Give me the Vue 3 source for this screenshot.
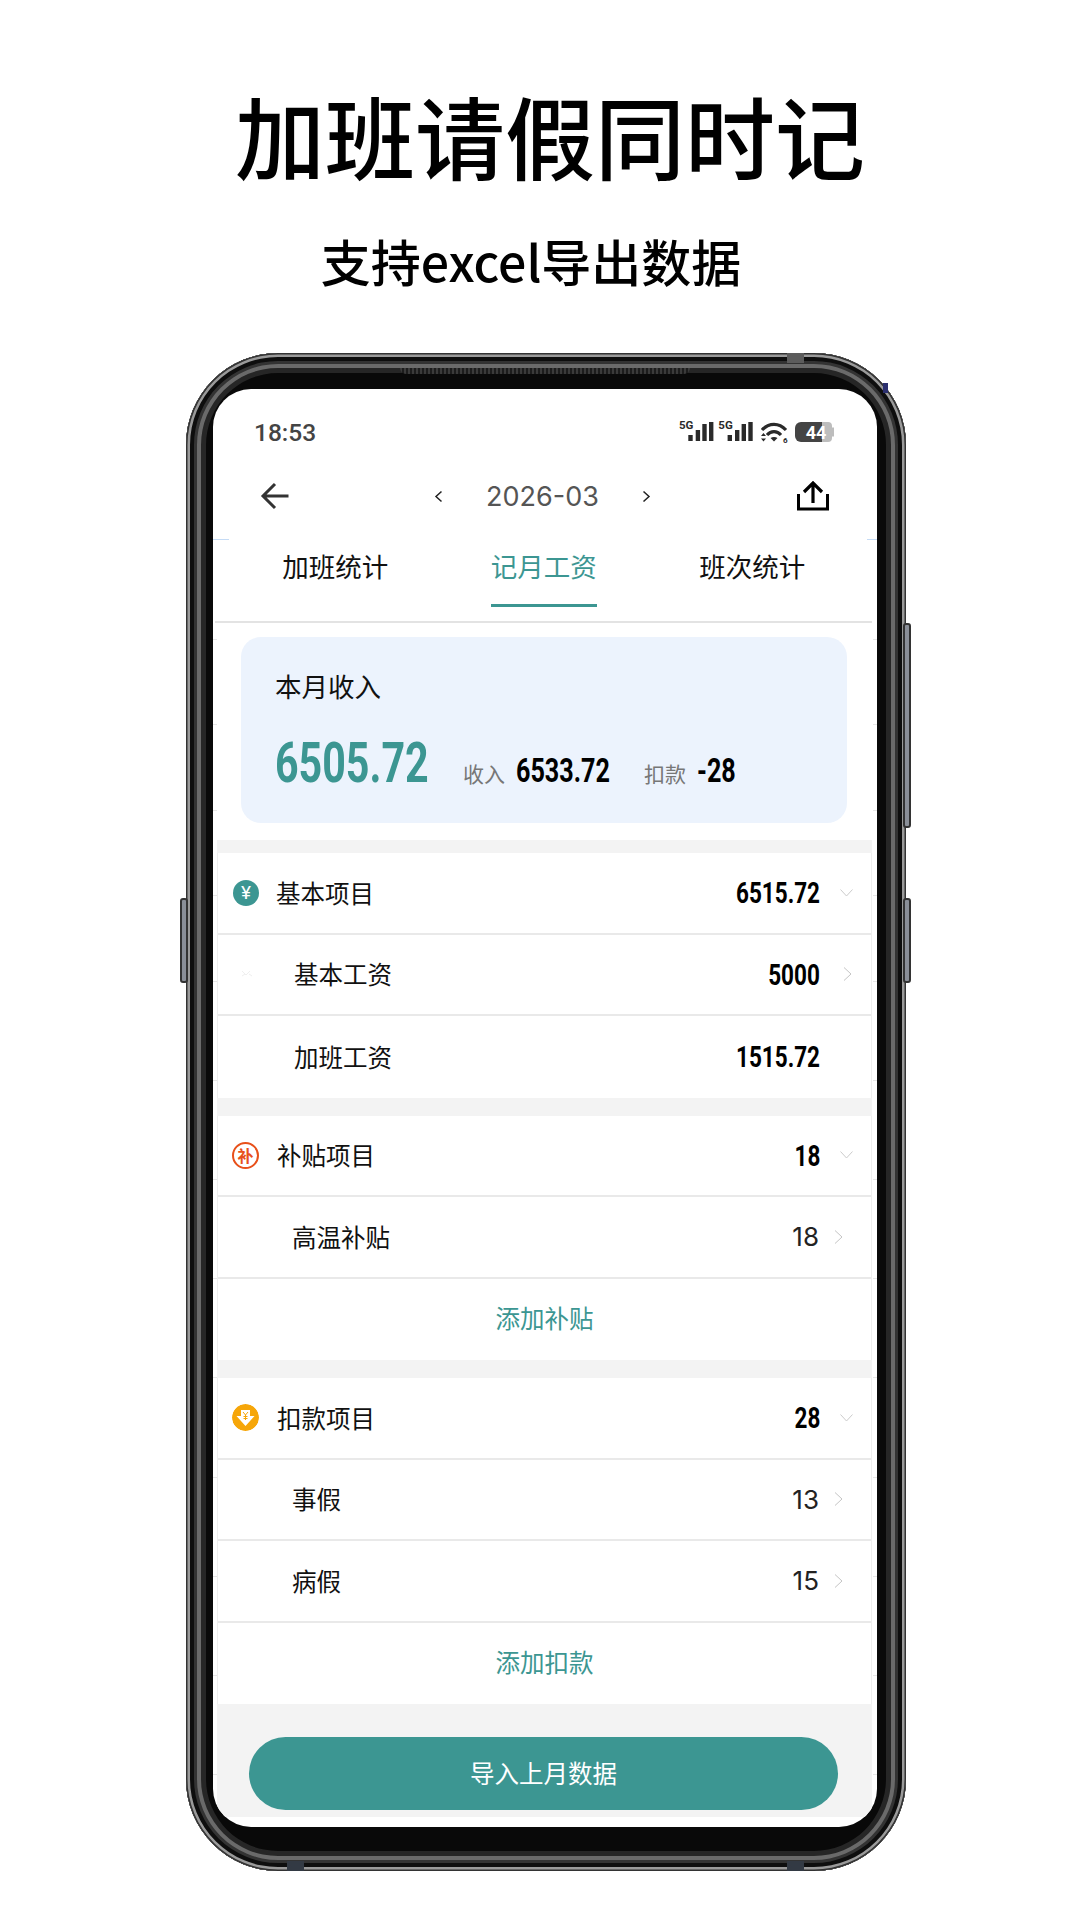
<script setup>
const groups = [
  {
    name: '基本项目', total: '6515.72', icon: 'yen', wide: true,
    items: [
      { name: '基本工资', value: '5000', bold: true, arrow: true },
      { name: '加班工资', value: '1515.72', bold: true, arrow: false }
    ]
  },
  {
    name: '补贴项目', total: '18', icon: 'bu',
    items: [{ name: '高温补贴', value: '18', arrow: true }],
    add: '添加补贴'
  },
  {
    name: '扣款项目', total: '28', icon: 'down',
    items: [
      { name: '事假', value: '13', arrow: true },
      { name: '病假', value: '15', arrow: true }
    ],
    add: '添加扣款'
  }
]

const tabs = ['加班统计', '记月工资', '班次统计']
// leftover marks of the mockup along both screen edges
const ticks = [250, 335, 421, 506, 592, 691, 790, 889, 988, 1088, 1187, 1286, 1385]
</script>

<template>
  <div class="page">
    <header class="hero">
      <h1 class="title">加班请假同时记</h1>
      <p class="subtitle">支持excel导出数据</p>
    </header>

    <div class="phone">
      <i class="stray"></i>
      <i class="speaker"></i>
      <i class="seam seam-top"></i>
      <i class="seam seam-bottom-l"></i>
      <i class="seam seam-bottom-r"></i>
      <i class="btn btn-power"></i>
      <i class="btn btn-side-r"></i>
      <i class="btn btn-side-l"></i>

      <div class="screen">
        <i v-for="t in ticks" :key="'l' + t" class="tick tick-l" :style="{ top: t + 'px' }"></i>
        <i v-for="t in ticks" :key="'r' + t" class="tick tick-r" :style="{ top: t + 'px' }"></i>
        <i class="blue blue-l"></i>
        <i class="blue blue-r"></i>

        <div class="status">
          <span class="time">18:53</span>
          <svg class="status-icons" width="156" height="30" viewBox="0 -3 156 30">
            <text x="0" y="8.6" class="net">5G</text>
            <path d="M9.3 15h4.400v6h-4.400zM16.7 10h4.400v11h-4.400zM23.3 4h4.400v17h-4.400zM30 2h4.400v19h-4.400z" fill="#2a2a2a" />
            <text x="39.3" y="8.6" class="net">5G</text>
            <path d="M48.6 15h4.400v6h-4.400zM56 10h4.400v11h-4.400zM62.6 4h4.400v17h-4.400zM69.3 2h4.400v19h-4.400z" fill="#2a2a2a" />
            <path d="M83 10C90 2.500 100 2.500 107 10M88 15c4-4.500 10-4.500 14 0" fill="none" stroke="#2a2a2a" stroke-width="3.200" />
            <path d="M91.500 18c2-1.500 5-1.500 7 0L95 21.500z" fill="#2a2a2a" />
            <path d="M84.500 13l2.500 3h-5zM84.500 21.500L82 18.500h5z" fill="#2a2a2a" />
            <text x="104" y="22.500" class="wifi-six">6</text>
            <path d="M122 2h21v20h-21a6 6 0 0 1-6-6v-8a6 6 0 0 1 6-6z" fill="#444" />
            <path d="M143 2h6a4 4 0 0 1 4 4v1.500h2v9h-2V18a4 4 0 0 1-4 4h-6z" fill="#bdbdbd" />
            <text x="137" y="18.500" class="batt">44</text>
          </svg>
        </div>

        <nav class="nav">
          <svg class="back" width="30" height="28" viewBox="0 0 30 28">
            <path d="M28.500 14H3M15 2L3 14l12 12" fill="none" stroke="#333" stroke-width="3" />
          </svg>
          <div class="month">
            <svg width="9" height="13" viewBox="0 0 9 13"><path d="M7.500 1.500L2 6.500l5.500 5" fill="none" stroke="#222" stroke-width="1.500" /></svg>
            <span class="date">2026-03</span>
            <svg width="9" height="13" viewBox="0 0 9 13"><path d="M1.500 1.500L7 6.500l-5.500 5" fill="none" stroke="#222" stroke-width="1.500" /></svg>
          </div>
          <svg class="share" width="34" height="30" viewBox="0 0 34 30">
            <path d="M2.500 13v15h29V13" fill="none" stroke="#000" stroke-width="3" />
            <path d="M17 22V3M8 11l9-9 9 9" fill="none" stroke="#000" stroke-width="3.200" />
          </svg>
        </nav>

        <div class="tabs">
          <div v-for="(t, i) in tabs" :key="t" class="tab">
            <span :class="{ active: i === 1 }">{{ t }}</span>
          </div>
        </div>

        <section class="card">
          <div class="card-title">本月收入</div>
          <div class="card-nums">
            <span class="big">6505.72</span>
            <span class="cap cap-first">收入</span>
            <span class="mid mid-income">6533.72</span>
            <span class="cap cap-next">扣款</span>
            <span class="mid mid-minus">-28</span>
          </div>
        </section>

        <div class="sheet">
          <svg class="speck" width="12" height="8" viewBox="0 0 12 8"><path d="M1 1l4 4 4-4M1 6l3-2M11 6l-3-2" fill="none" stroke="#efefef" stroke-width="1" /></svg>
          <section v-for="g in groups" :key="g.name" class="group">
            <div class="row head">
              <span v-if="g.icon === 'yen'" class="ico ico-yen">¥</span>
              <span v-else-if="g.icon === 'bu'" class="ico ico-bu">补</span>
              <svg v-else class="ico" width="27" height="27" viewBox="0 0 27 27">
                <circle cx="13.500" cy="13.500" r="13.500" fill="#f6a609" />
                <path d="M9 6h9v6h4.500l-9 10-9-10H9z" fill="#fff" />
                <path d="M11 8l2.500 3 2.500-3M13.500 11v5M11.500 12.500h4M11.500 14.500h4" fill="none" stroke="#f6a609" stroke-width="1" />
              </svg>
              <span class="label">{{ g.name }}</span>
              <span class="num num-bold">{{ g.total }}</span>
              <span class="chev">
                <svg width="13" height="8" viewBox="0 0 13 8"><path d="M.5.500l6 6.500 6-6.500" fill="none" stroke="#ccc" stroke-width="1" /></svg>
              </span>
            </div>
            <div v-for="it in g.items" :key="it.name" class="row item" :class="{ 'item-wide': g.wide }">
              <span class="label">{{ it.name }}</span>
              <span class="num" :class="{ 'num-bold': it.bold, 'num-light': !it.bold }">{{ it.value }}</span>
              <span class="chev" :class="{ 'chev-wide': g.wide }">
                <svg v-if="it.arrow" width="9" height="14" viewBox="0 0 9 14"><path d="M1 .500l7 6.500-7 6.500" fill="none" stroke="#c4c4c4" stroke-width="1" /></svg>
              </span>
            </div>
            <div v-if="g.add" class="row add">{{ g.add }}</div>
          </section>

          <div class="foot">
            <button class="import">导入上月数据</button>
          </div>
        </div>
      </div>
    </div>
  </div>
</template>

<style>
html,
body {
  margin: 0;
  background: #fff;
}
</style>

<style scoped>
.page {
  position: relative;
  width: 1080px;
  height: 1920px;
  overflow: hidden;
  background: #fff;
  font-family: "Noto Sans CJK SC", "Noto Sans", sans-serif;
  color: #111;
}

.hero {
  height: 353px;
  box-sizing: border-box;
  padding-top: 84px;
  text-align: center;
}

.title {
  margin: 0;
  padding-left: 20px;
  font-size: 90px;
  line-height: 100px;
  font-weight: 500;
  color: #000;
}

.subtitle {
  margin: 46px 0 0;
  padding-right: 18px;
  font-size: 50px;
  line-height: 60px;
  font-weight: 500;
  color: #000;
}

.phone {
  position: relative;
  z-index: 0;
  box-sizing: border-box;
  width: 720px;
  height: 1518px;
  margin-left: 186px;
  padding: 36px 29px 44px 27px;
  border-radius: 92px;
  background: #090909;
  box-shadow:
    inset 0 0 0 1.500px #333,
    inset 0 0 0 4px #9a9a9a,
    inset 0 0 0 8px #0e0e0e,
    inset 0 0 0 11px #333,
    inset 0 0 0 15px #6a6a6a,
    inset 0 0 0 20px #262626;
}

.stray {
  position: absolute;
  left: 697px;
  top: 30px;
  width: 5px;
  height: 10px;
  background: #2b2f6e;
  z-index: -1;
}

.speaker {
  position: absolute;
  left: 214px;
  top: 15px;
  width: 290px;
  height: 6px;
  border-radius: 0 0 6px 6px;
  background: repeating-linear-gradient(90deg, #3a3a3a 0 2px, #1c1c1c 2px 4px);
}

.seam {
  position: absolute;
  width: 17px;
  height: 10px;
  background: #5c5c5c;
}

.seam-top {
  left: 601px;
  top: 0;
}

.seam-bottom-l {
  left: 101px;
  bottom: 0;
  background: #333a44;
}

.seam-bottom-r {
  left: 601px;
  bottom: 0;
  background: #333a44;
}

.btn {
  position: absolute;
  box-sizing: border-box;
  width: 8px;
  border: 2px solid #333;
  border-radius: 3px;
  background: #8a8f98;
}

.btn-power {
  left: 717px;
  top: 270px;
  height: 205px;
}

.btn-side-r {
  left: 717px;
  top: 545px;
  height: 85px;
}

.btn-side-l {
  left: -6px;
  top: 545px;
  height: 85px;
}

.screen {
  position: relative;
  width: 664px;
  height: 1438px;
  overflow: hidden;
  border-radius: 38px;
  background: #fff;
}

.tick {
  position: absolute;
  width: 4px;
  height: 1px;
  background: #e6e6e6;
}

.tick-l {
  left: 0;
}

.tick-r {
  right: 0;
}

.blue {
  position: absolute;
  top: 150px;
  height: 1px;
  background: #c5dbf5;
}

.blue-l {
  left: 0;
  width: 16px;
}

.blue-r {
  right: 0;
  width: 10px;
}

.status {
  position: relative;
  display: flex;
  align-items: center;
  justify-content: space-between;
  height: 86px;
  padding: 0 42px 0 41px;
}

.time {
  font-family: Roboto, sans-serif;
  font-size: 24.5px;
  font-weight: 500;
  color: #444;
}

.status-icons {
  display: block;
}

.net {
  font-family: Roboto, sans-serif;
  font-size: 11.5px;
  font-weight: 700;
  fill: #2a2a2a;
}

.wifi-six {
  font-family: Roboto, sans-serif;
  font-size: 8px;
  font-weight: 700;
  fill: #2a2a2a;
}

.batt {
  font-family: Roboto, sans-serif;
  font-size: 18px;
  font-weight: 700;
  fill: #fff;
  text-anchor: middle;
}

.nav {
  position: relative;
  display: grid;
  grid-template-columns: 1fr auto 1fr;
  align-items: center;
  height: 42px;
  padding: 0 47px;
}

.back {
  display: block;
}

.share {
  display: block;
  justify-self: end;
}

.month {
  display: flex;
  align-items: center;
  gap: 43px;
  margin-left: -5px;
}

.month svg {
  display: block;
}

.date {
  padding-top: 2px;
  font-family: Inter, sans-serif;
  font-size: 27px;
  line-height: 36px;
  color: #555;
}

.tabs {
  position: relative;
  display: grid;
  grid-template-columns: repeat(3, 208.500px);
  height: 84px;
  box-sizing: border-box;
  margin: 22px 5px 0 2px;
  padding: 12px 0 0 16px;
  border-bottom: 2px solid #e3e3e3;
}

.tab {
  text-align: center;
  font-size: 26.500px;
  line-height: 30px;
  color: #111;
}

.tab span {
  display: inline-block;
  padding-bottom: 23px;
}

.tab .active {
  color: #3c9692;
  border-bottom: 3px solid #3c9692;
}

.card {
  position: relative;
  display: flex;
  flex-direction: column;
  box-sizing: border-box;
  width: 606px;
  height: 186px;
  margin: 14px 0 17px 28px;
  padding: 34px 34px 0;
  border-radius: 20px;
  background: #ecf3fd;
}

.card-title {
  font-size: 26.500px;
  line-height: 30px;
  color: #111;
}

.card-nums {
  display: flex;
  align-items: baseline;
  margin-top: 32px;
  line-height: 60px;
}

.big {
  display: inline-block;
  margin-right: -55px;
  font-family: Roboto, sans-serif;
  font-size: 56px;
  font-weight: 700;
  color: #3c9692;
  transform: scaleX(0.735);
  transform-origin: left center;
}

.cap {
  font-size: 21px;
  color: #777;
  margin-right: 11px;
}

.cap-first {
  margin-left: 34px;
}

.cap-next {
  margin-left: 34px;
}

.mid {
  display: inline-block;
  font-family: Roboto, sans-serif;
  font-size: 34px;
  font-weight: 700;
  color: #000;
  transform: scaleX(0.74);
  transform-origin: left center;
}

.mid-income {
  margin-right: -33px;
}

.mid-minus {
  margin-right: -14px;
}

.sheet {
  position: relative;
  margin: 0 5px 0 4px;
  padding-top: 13px;
  background: #f3f3f3;
}

.speck {
  position: absolute;
  left: 24px;
  top: 130px;
  z-index: 1;
}

.group {
  background: #fff;
  border-left: 1px solid #eee;
  border-right: 1px solid #eee;
}

.group + .group {
  margin-top: 18px;
}

.row {
  display: flex;
  align-items: center;
  box-sizing: border-box;
  height: 81.500px;
  border-bottom: 2px solid #e9e9e9;
}

.group:first-child .row {
  border-bottom-color: #f1f1f1;
}

.row:last-child {
  border-bottom: none;
}

.head {
  padding-left: 14px;
}

.item {
  padding-left: 74px;
}

.item-wide {
  padding-left: 76px;
}

.label {
  flex: 1;
  font-size: 24.500px;
  line-height: 30px;
  color: #111;
}

.ico {
  display: flex;
  flex: none;
  align-items: center;
  justify-content: center;
  box-sizing: border-box;
  width: 27px;
  height: 27px;
  margin-right: 18px;
  border-radius: 50%;
}

.ico-yen {
  width: 26px;
  height: 26px;
  margin-left: 1px;
  margin-right: 17px;
  background: #3c9692;
  color: #fff;
  font-family: Roboto, sans-serif;
  font-size: 19px;
}

.ico-bu {
  border: 2px solid #e8501a;
  color: #e8501a;
  font-size: 16px;
  font-weight: 700;
}

.num {
  font-family: Inter, sans-serif;
  font-size: 26px;
  color: #111;
}

.num-light {
  color: #222;
}

.num-bold {
  display: inline-block;
  font-family: Roboto, sans-serif;
  font-size: 30px;
  font-weight: 700;
  color: #000;
  transform: scaleX(0.75);
  transform-origin: right center;
}

.chev {
  display: flex;
  flex: none;
  box-sizing: border-box;
  width: 52px;
  padding-left: 15px;
}

.chev svg {
  display: block;
}

.chev-wide {
  width: 51px;
  padding-left: 23px;
}

.head .chev {
  width: 51px;
  padding-left: 20px;
}

.add {
  justify-content: center;
  padding-bottom: 3px;
  font-size: 24.500px;
  color: #3c9692;
}

.foot {
  height: 113px;
  box-sizing: border-box;
  padding: 33px 0 0 32px;
}

.import {
  display: block;
  width: 589px;
  height: 73px;
  padding: 0 0 2px;
  border: none;
  border-radius: 37px;
  background: #3c9692;
  color: #fff;
  font-family: "Noto Sans CJK SC", sans-serif;
  font-size: 24.500px;
}
</style>
